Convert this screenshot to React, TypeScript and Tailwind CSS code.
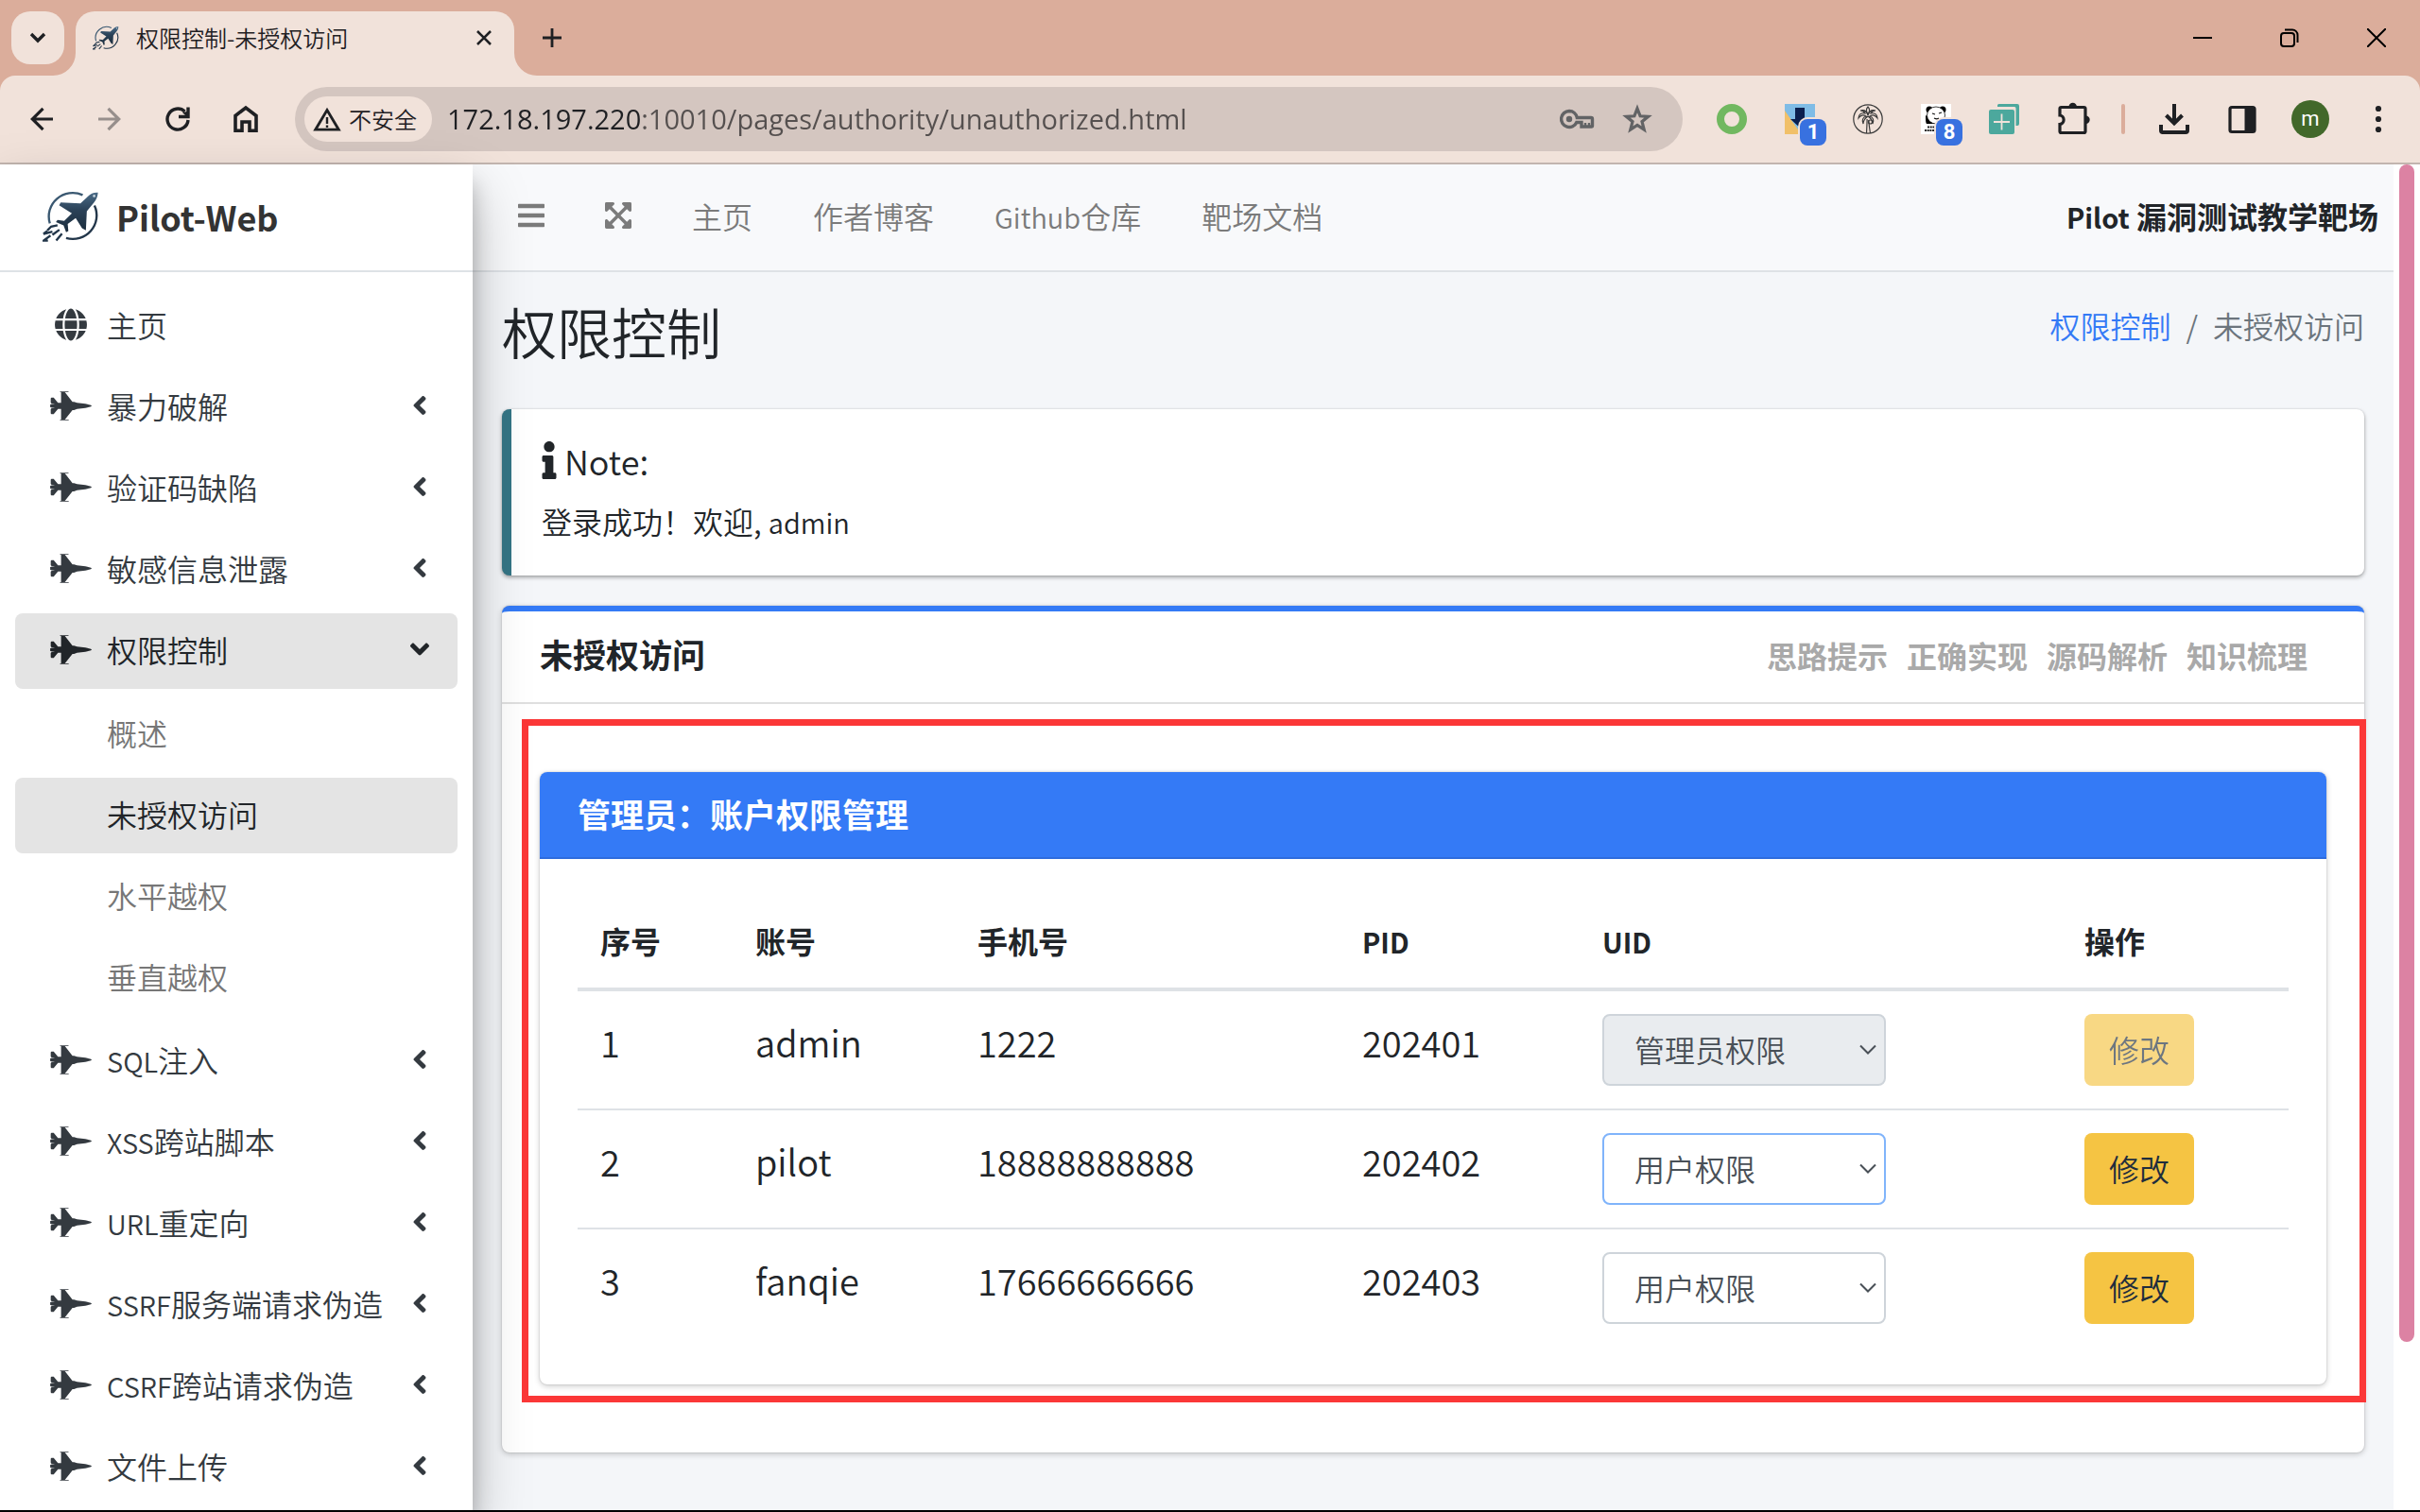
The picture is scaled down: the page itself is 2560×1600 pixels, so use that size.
import { useState } from 'react';
import { FaAngleLeft, FaBars, FaExpandArrowsAlt, FaFighterJet, FaGlobe, FaInfo } from 'react-icons/fa';

const menuTop = ['暴力破解', '验证码缺陷', '敏感信息泄露'];
const subMenu = ['概述', '未授权访问', '水平越权', '垂直越权'];
const menuBottom = ['SQL注入', 'XSS跨站脚本', 'URL重定向', 'SSRF服务端请求伪造', 'CSRF跨站请求伪造', '文件上传'];
const navLinks = ['主页', '作者博客', 'Github仓库', '靶场文档'];
const cardTools = ['思路提示', '正确实现', '源码解析', '知识梳理'];

const users = [
  { id: 1, name: 'admin', phone: '1222', pid: '202401', role: '管理员权限' },
  { id: 2, name: 'pilot', phone: '18888888888', pid: '202402', role: '用户权限' },
  { id: 3, name: 'fanqie', phone: '17666666666', pid: '202403', role: '用户权限' },
];

// Latin runs are set a little smaller than the Chinese around them
function Label({ text }: { text: string }) {
  return (
    <>
      {text.split(/([A-Za-z]+)/).map((part, i) =>
        i % 2 === 1 ? (
          <span key={i} className="text-[29px] leading-none">
            {part}
          </span>
        ) : (
          part
        ),
      )}
    </>
  );
}

function PilotLogo({ className }: { className: string }) {
  return (
    <svg viewBox="135 604 178 160" className={className} fill="none" aria-hidden="true">
      <defs>
        <linearGradient id="logoFill" x1="0" y1="0" x2="0" y2="1">
          <stop offset="0" stopColor="#4a6b87" />
          <stop offset="0.45" stopColor="#2a4157" />
          <stop offset="1" stopColor="#1b2c3c" />
        </linearGradient>
      </defs>
      <path d="M261 617A75 74 0 0 0 158 706" stroke="#3a5871" strokeWidth="7" />
      <path d="M298 650A75 74 0 0 1 209 752" stroke="#22364a" strokeWidth="7" />
      <path
        d="M309 609c-12-1-20 2-28 9l-27 25-62-3-5 9 40 25-24 24-21-3-5 7 24 10 8 22 7-4-2-22 25-19 20 32 12 7 3-60 22-27c8-10 12-20 13-32z"
        fill="url(#logoFill)"
      />
      <circle cx="297" cy="620" r="4" fill="#c9d6e0" />
      <path d="M182 712l-20 4-12 12M166 732l-28 7 12-9M188 726l-22 16M160 744l-22 16h14M196 738l-18 22" stroke="#22364a" strokeWidth="7" />
    </svg>
  );
}

function TabStrip() {
  return (
    <div className="flex h-20 items-start bg-[#dbad9b] pl-3 pt-3">
      <button aria-label="Search tabs" className="flex size-14 items-center justify-center rounded-[20px] bg-[#f1e2da]">
        <svg viewBox="0 0 20 12" className="h-3 w-5" fill="none" stroke="#1f2023" strokeWidth="3.4">
          <path d="M3 2l7 7 7-7" />
        </svg>
      </button>
      <div className="relative ml-3 flex h-17 w-[464px] items-start rounded-t-[20px] bg-[#f1e2da] pl-[18px] pr-6">
        <svg viewBox="0 0 24 24" className="absolute -left-6 bottom-0 size-6" fill="#f1e2da">
          <path d="M24 0v24H0A24 24 0 0 0 24 0z" />
        </svg>
        <svg viewBox="0 0 24 24" className="absolute -right-6 bottom-0 size-6" fill="#f1e2da">
          <path d="M0 0v24h24A24 24 0 0 1 0 0z" />
        </svg>
        <div className="flex h-14 w-full items-center">
          <PilotLogo className="h-[26px] w-7" />
          <span className="ml-[18px] text-2xl font-[350] text-[#1f2023]">权限控制-未授权访问</span>
          <button aria-label="Close tab" className="ml-auto">
            <svg viewBox="0 0 16 16" className="size-4" stroke="#1f2023" strokeWidth="2.6">
              <path d="M1 1l14 14M15 1L1 15" />
            </svg>
          </button>
        </div>
      </div>
      <button aria-label="New tab" className="ml-[30px] flex h-14 items-center">
        <svg viewBox="0 0 20 20" className="size-5" stroke="#1f2023" strokeWidth="2.8">
          <path d="M10 0v20M0 10h20" />
        </svg>
      </button>
      <div className="ml-auto flex h-14 items-center gap-[72px] pr-9">
        <button aria-label="Minimize">
          <svg viewBox="0 0 20 20" className="size-5" stroke="#000" strokeWidth="2">
            <path d="M0 10h20" />
          </svg>
        </button>
        <button aria-label="Restore">
          <svg viewBox="0 0 20 20" className="size-5" fill="none" stroke="#000" strokeWidth="2">
            <rect x="1" y="5" width="14" height="14" rx="3" />
            <path d="M5 1.5h8a5.500 5.500 0 0 1 5.500 5.500v8" />
          </svg>
        </button>
        <button aria-label="Close window">
          <svg viewBox="0 0 20 20" className="size-5" stroke="#000" strokeWidth="2">
            <path d="M0 0l20 20M20 0L0 20" />
          </svg>
        </button>
      </div>
    </div>
  );
}

function Badge({ value }: { value: string }) {
  return (
    <span className="absolute left-4 top-4 flex h-7 w-7 items-center justify-center rounded-lg bg-[#3871e0] font-[Roboto,sans-serif] text-[22px] font-bold text-white ring-2 ring-[#f1e2da]">
      {value}
    </span>
  );
}

function Toolbar() {
  return (
    <div className="bg-[#dbad9b]">
      <div className="flex h-[94px] items-center rounded-t-2xl border-b-2 border-[#c2b5af] bg-[#f1e2da] pl-[31px] pr-7">
        <div className="flex items-center gap-[46px]">
          <button aria-label="Back">
            <svg viewBox="0 0 26 26" className="size-[26px]" fill="none" stroke="#1f2023" strokeWidth="3.2">
              <path d="M25 13H3.500M14.500 1.800L3.300 13l11.200 11.200" />
            </svg>
          </button>
          <button aria-label="Forward" disabled>
            <svg viewBox="0 0 26 26" className="size-[26px]" fill="none" stroke="#978f8c" strokeWidth="3.2">
              <path d="M1 13h21.500M11.500 1.800L22.700 13 11.500 24.200" />
            </svg>
          </button>
          <button aria-label="Reload">
            <svg viewBox="0 0 26 26" className="size-[26px]" fill="none" stroke="#1f2023" strokeWidth="3.4">
              <path d="M24 14a11 11 0 1 1-3.500-9" />
              <path d="M24 .5v10H14" />
              <path d="M18 6l5 5V5z" fill="#1f2023" stroke="none" />
            </svg>
          </button>
          <button aria-label="Home">
            <svg viewBox="0 0 26 30" className="h-[30px] w-[26px]" fill="none" stroke="#1f2023" strokeWidth="3.6">
              <path d="M2 11.500L13 3l11 8.500V27.200h-7V18H9v9.200H2z" />
            </svg>
          </button>
        </div>
        <div className="ml-[39px] flex h-17 flex-1 items-center rounded-full bg-[#d4c6c0] pl-[10px] pr-8">
          <button className="flex h-12 items-center gap-2 rounded-full bg-[#f1e2da] pl-[9px] pr-4 text-2xl font-[350] text-[#1f2023]">
            <svg viewBox="0 0 30 26" className="h-[26px] w-[30px]" fill="none" stroke="#1f2023" strokeWidth="2.800">
              <path d="M15 3.500L27.300 24.200H2.700z" />
              <path d="M15 11v7M15 19.500v2.500" strokeWidth="2.400" />
            </svg>
            <span>不安全</span>
          </button>
          <input
            aria-label="Address"
            defaultValue="172.18.197.220:10010/pages/authority/unauthorized.html"
            className="ml-4 min-w-0 flex-1 bg-[linear-gradient(90deg,#1f2023_205px,#55504f_205px)] bg-clip-text font-['Open_Sans','Noto_Sans',sans-serif] text-[29px] text-transparent outline-none"
          />
          <div className="flex items-center gap-[29px]">
            <button aria-label="Passwords">
              <svg viewBox="0 0 38 22" className="h-[22px] w-[38px]" fill="none" stroke="#626365" strokeWidth="3.400">
                <path d="M11 2.500a8.500 8.500 0 1 0 7.800 12H24V19h10.500a1 1 0 0 0 1-1v-7a1.500 1.500 0 0 0-1.500-1.500H19.300A8.500 8.500 0 0 0 11 2.500z" />
                <path d="M28 19v-4M32 19v-4" strokeWidth="2.400" />
                <circle cx="11" cy="11" r="3.200" fill="#626365" stroke="none" />
              </svg>
            </button>
            <button aria-label="Bookmark">
              <svg viewBox="0 0 32 32" className="size-8" fill="none" stroke="#626365" strokeWidth="3.200">
                <path d="M16 4.800l3.100 8 8.500.5-6.600 5.400 2.200 8.500L16 22.500l-7.200 4.700 2.200-8.500-6.600-5.400 8.500-.5z" />
              </svg>
            </button>
          </div>
        </div>
        <div className="ml-9 flex items-center gap-10">
          <button aria-label="Recorder" className="size-8 rounded-full border-8 border-[#71b860]" />
          <button aria-label="Downloader" className="relative size-8">
            <svg viewBox="0 0 32 32" className="size-8">
              <path fill="#7fbce6" d="M0 0h32v32H0z" />
              <path fill="#f1c069" d="M0 7l14 20v5H0z" />
              <path fill="#0b1f4e" d="M11 4h10v12h6L17 26 6 16h5z" />
            </svg>
            <Badge value="1" />
          </button>
          <button aria-label="Palm">
            <svg viewBox="0 0 32 32" className="size-8" fill="none" stroke="#3a3a3a" strokeWidth="1.200">
              <circle cx="16" cy="16" r="15.200" />
              <path d="M14.500 31c.3-6 .6-11 .6-15M18.500 31c-.8-5-1.500-10-1.700-14" />
              <path d="M16 12c-1-4-4-6-8-5 3 0 4 1 5 3-4-1-7 1-7 5 2-3 5-4 8-2-3 1-5 4-3 8 0-4 2-6 5-8M16 12c1-4 4-6 8-5-3 0-4 1-5 3 4-1 7 1 7 5-2-3-5-4-8-2 3 1 5 4 3 8 0-4-2-6-5-8" />
              <path d="M16 11c-2-3-2-6 0-8 2 2 2 5 0 8" />
              <circle cx="18.500" cy="19" r="2" />
            </svg>
          </button>
          <button aria-label="Panda" className="relative size-8">
            <svg viewBox="0 0 32 32" className="size-8">
              <path fill="#fff" d="M0 0h32v32H0z" />
              <circle cx="9" cy="6" r="3.500" />
              <circle cx="23" cy="6" r="3.500" />
              <path d="M5 12c0 4 0 8 1 9h12l-4-4z" />
              <ellipse cx="16" cy="12" rx="9.500" ry="9" fill="#fff" stroke="#111" strokeWidth=".8" />
              <path d="M12 10l3 1M19 10l3-1M14 15c2 1 4 1 5 0" stroke="#111" strokeWidth="1.200" fill="none" />
              <path d="M7 24.500h8M4 28h12" stroke="#222" strokeWidth="1.800" strokeDasharray="2 .7" />
            </svg>
            <Badge value="8" />
          </button>
          <button aria-label="Add copy">
            <svg viewBox="0 0 32 32" className="size-8" fill="#4ca89d">
              <rect x="0" y="6" width="27" height="26" rx="2" />
              <path d="M9 3V1.500A1.500 1.500 0 0 1 10.500 0H30a2 2 0 0 1 2 2v19a2 2 0 0 1-2 2h-1.500V4.500a1.500 1.500 0 0 0-1.500-1.500z" />
              <path d="M13.500 10.500v17M5 19h17" stroke="#f1e2da" strokeWidth="1.800" />
            </svg>
          </button>
          <button aria-label="Extensions">
            <svg viewBox="0 2 32 32" className="size-8 overflow-visible" fill="none" stroke="#1f2023" strokeWidth="3.200">
              <path d="M4.500 5.500h24a1.500 1.500 0 0 1 1.500 1.500v24a1.500 1.500 0 0 1-1.500 1.500h-24A1.500 1.500 0 0 1 3 31v-7.500a4.800 4.800 0 0 0 0-9.500V7a1.500 1.500 0 0 1 1.500-1.500z" />
              <path d="M12.500 5a4.200 4.200 0 0 1 8.400 0zM30.500 14.500a4.200 4.200 0 0 1 0 8.400z" fill="#1f2023" stroke="none" />
            </svg>
          </button>
          <div className="-mx-1 h-8 w-1 rounded-full bg-[#dbad9b]" />
          <button aria-label="Downloads">
            <svg viewBox="0 0 32 32" className="size-8" fill="none" stroke="#1f2023" strokeWidth="4">
              <path d="M16 0v20M7.500 12l8.500 8.500 8.500-8.500" />
              <path d="M2 22v6a2 2 0 0 0 2 2h24a2 2 0 0 0 2-2v-6" />
            </svg>
          </button>
          <button aria-label="Side panel">
            <svg viewBox="0 0 32 32" className="size-8" fill="none" stroke="#1f2023" strokeWidth="3.200">
              <rect x="3" y="3.500" width="26" height="26" rx="2" />
              <path d="M18.500 3h10v26h-10z" fill="#1f2023" stroke="none" />
            </svg>
          </button>
          <button className="-mx-1 flex size-10 items-center justify-center rounded-full bg-[#42682a] font-[Roboto,sans-serif] text-[22px] text-white">
            m
          </button>
          <button aria-label="Menu">
            <svg viewBox="0 0 32 32" className="size-8" fill="#1f2023">
              <circle cx="16" cy="5" r="3.100" />
              <circle cx="16" cy="16" r="3.100" />
              <circle cx="16" cy="27" r="3.100" />
            </svg>
          </button>
        </div>
      </div>
    </div>
  );
}

function MenuItem({ label, open }: { label: string; open?: boolean }) {
  return (
    <a
      href="#"
      className={`flex h-20 items-center rounded-lg pb-1 pl-[37px] pr-8 ${open ? 'bg-[#e4e4e4] text-[#212529]' : 'text-[#343a40]'}`}
    >
      <FaFighterJet className="h-[35px] w-11 shrink-0" />
      <span className="ml-4 whitespace-nowrap">
        <Label text={label} />
      </span>
      <FaAngleLeft className={`ml-auto h-8 w-4 shrink-0 ${open ? '-rotate-90' : ''}`} />
    </a>
  );
}

function Sidebar() {
  return (
    <aside className="relative z-10 flex w-[500px] shrink-0 flex-col bg-white shadow-[0_28px_56px_rgba(0,0,0,0.25),0_20px_20px_rgba(0,0,0,0.22)]">
      <a href="#" className="flex h-[114px] shrink-0 items-center border-b-2 border-[#dee2e6] pb-0.5 pl-[45px] text-[36px] font-bold text-[#333]">
        <PilotLogo className="h-[54px] w-[60px]" />
        <span className="ml-[18px]">Pilot-Web</span>
      </a>
      <nav className="min-h-0 flex-1 overflow-hidden px-4 pt-[17px] font-[350]">
        <ul className="flex flex-col gap-1.5">
          <li>
            <a href="#" className="flex h-20 items-center pb-1 pl-[37px] text-[#343a40]">
              <span className="flex w-11 justify-center">
                <FaGlobe className="h-[35px] w-[34px]" />
              </span>
              <span className="ml-4">主页</span>
            </a>
          </li>
          {menuTop.map((label) => (
            <li key={label}>
              <MenuItem label={label} />
            </li>
          ))}
          <li>
            <MenuItem label="权限控制" open />
            <ul className="mb-0.5 mt-2 flex flex-col gap-1.5">
              {subMenu.map((label) => (
                <li key={label}>
                  <a
                    href="#"
                    className={`flex h-20 items-center rounded-lg pb-1 pl-[97px] ${label === '未授权访问' ? 'bg-[#e4e4e4] text-[#212529]' : 'text-[#777]'}`}
                  >
                    {label}
                  </a>
                </li>
              ))}
            </ul>
          </li>
          {menuBottom.map((label) => (
            <li key={label}>
              <MenuItem label={label} />
            </li>
          ))}
        </ul>
      </nav>
    </aside>
  );
}

function RoleSelect({ id, role, focused }: { id: number; role: string; focused: boolean }) {
  const disabled = id === 1;

  return (
    <div className="relative w-[300px]">
      <select
        aria-label={`UID ${id}`}
        defaultValue={role}
        disabled={disabled}
        className={`h-19 w-full appearance-none rounded-lg border-2 pb-0.5 pl-8 pr-12 font-[350] text-[#495057] outline-none disabled:opacity-100 ${
          disabled ? 'border-[#ced4da] bg-[#e9ecef]' : focused ? 'border-[#80b4fb] bg-white' : 'border-[#ced4da] bg-white'
        }`}
      >
        <option>管理员权限</option>
        <option>用户权限</option>
      </select>
      <svg viewBox="0 0 18 12" className="pointer-events-none absolute right-2.5 top-8 h-3 w-[18px]" fill="none" stroke="#495057" strokeWidth="2">
        <path d="M1 1.500l8 8 8-8" />
      </svg>
    </div>
  );
}

function UserTable() {
  const [focusedId] = useState(2);

  return (
    <table className="w-full table-fixed border-separate border-spacing-0 text-left">
      <colgroup>
        <col className="w-[164px]" />
        <col className="w-[235px]" />
        <col className="w-[407px]" />
        <col className="w-[254px]" />
        <col />
        <col className="w-[240px]" />
      </colgroup>
      <thead>
        <tr>
          {['序号', '账号', '手机号', 'PID', 'UID', '操作'].map((title) => (
            <th key={title} className="border-b-4 border-[#dee2e6] px-6 pb-[26px] pt-[22px] font-bold">
              <Label text={title} />
            </th>
          ))}
        </tr>
      </thead>
      <tbody className="[&>tr+tr>td]:border-t-2 [&>tr>td]:border-[#dee2e6] [&>tr>td]:p-6 [&>tr>td]:align-top">
        {users.map((user) => (
          <tr key={user.id} className="text-[38px] font-[350] leading-[60px]">
            <td>{user.id}</td>
            <td>{user.name}</td>
            <td>{user.phone}</td>
            <td>{user.pid}</td>
            <td className="text-[32px] leading-[48px]">
              <RoleSelect id={user.id} role={user.role} focused={user.id === focusedId} />
            </td>
            <td className="text-[32px] leading-[48px]">
              <button
                disabled={user.id === 1}
                className="block h-19 rounded-lg bg-[#f5c443] px-[26px] pb-0.5 font-[350] text-[#1f2d3d] disabled:opacity-65"
              >
                修改
              </button>
            </td>
          </tr>
        ))}
      </tbody>
    </table>
  );
}

export default function App() {
  return (
    <div className="flex h-screen flex-col overflow-hidden border-b-2 border-black bg-white font-['Noto_Sans_CJK_SC',sans-serif] text-[32px] leading-[48px] text-[#212529]">
      <header className="shrink-0">
        <TabStrip />
        <Toolbar />
      </header>
      <div className="flex min-h-0 flex-1">
        <Sidebar />
        <div className="flex min-w-0 flex-1 flex-col bg-[#f4f6f9]">
          {/* Top navbar */}
          <nav className="flex h-[114px] shrink-0 items-center border-b-2 border-[#dee2e6] bg-[#f8f9fb] px-4 pb-1 font-[350] text-[#7b7b7b]">
            <button aria-label="Toggle sidebar" className="px-8">
              <FaBars className="h-8 w-7" />
            </button>
            <button aria-label="Fullscreen" className="px-8">
              <FaExpandArrowsAlt className="h-8 w-7" />
            </button>
            {navLinks.map((label) => (
              <a key={label} href="#" className="px-8">
                <Label text={label} />
              </a>
            ))}
            <span className="ml-auto font-bold text-[#212529]">
              <Label text="Pilot 漏洞测试教学靶场" />
            </span>
          </nav>

          <main className="px-[31px]">
            {/* Page title and breadcrumb */}
            <div className="flex items-start justify-between pb-[49px] pt-7">
              <h1 className="text-[58px] font-[350] leading-[68px]">权限控制</h1>
              <div className="flex pt-1 font-[350]">
                <a href="#" className="text-[#347af6]">权限控制</a>
                <span className="px-4 text-[#6c757d]">/</span>
                <span className="text-[#6c757d]">未授权访问</span>
              </div>
            </div>

            {/* Login note */}
            <section className="rounded-lg border-l-[10px] border-[#357585] bg-white px-8 pb-[34px] pt-[30px] shadow-[0_0_2px_rgba(0,0,0,0.12),0_2px_4px_rgba(0,0,0,0.35)]">
              <h5 className="flex items-center gap-2 text-[36px] font-[350] leading-[48px]">
                <FaInfo className="h-10 w-4" />
                Note:
              </h5>
              <p className="mt-4 font-[350]">
                <Label text="登录成功！欢迎, admin" />
              </p>
            </section>

            {/* Main card */}
            <section className="relative mt-8 rounded-lg border-t-[6px] border-[#347af6] bg-white shadow-[0_0_2px_rgba(0,0,0,0.2),0_2px_6px_rgba(0,0,0,0.2)]">
              <div className="flex h-[98px] items-center justify-between border-b-2 border-[#dfdfdf] pb-1 pl-10 pr-[60px]">
                <h3 className="pb-0.5 text-[35px] font-bold">未授权访问</h3>
                <div className="flex gap-5 font-bold text-[#a9a9a9]">
                  {cardTools.map((label) => (
                    <a key={label} href="#">
                      {label}
                    </a>
                  ))}
                </div>
              </div>
              <div className="px-10 py-18">
                <div className="rounded-lg bg-white shadow-[0_0_2px_rgba(0,0,0,0.2),0_2px_6px_rgba(0,0,0,0.2)]">
                  <div className="flex h-[92px] items-center rounded-t-lg border-b-2 border-[#2e6cdd] bg-[#347af6] px-10 pb-0.5">
                    <h3 className="text-[35px] font-bold text-white">管理员：账户权限管理</h3>
                  </div>
                  <div className="p-10">
                    <UserTable />
                  </div>
                </div>
              </div>
              {/* Highlight frame around the account panel */}
              <div className="pointer-events-none absolute -right-0.5 bottom-[53px] left-[21px] top-[114px] border-[7px] border-[#fb3737]" />
            </section>
          </main>
        </div>
        {/* Page scrollbar */}
        <div className="w-7 shrink-0 bg-white px-1.5">
          <div className="h-7/8 rounded-full bg-[#dc82a3]" />
        </div>
      </div>
    </div>
  );
}
